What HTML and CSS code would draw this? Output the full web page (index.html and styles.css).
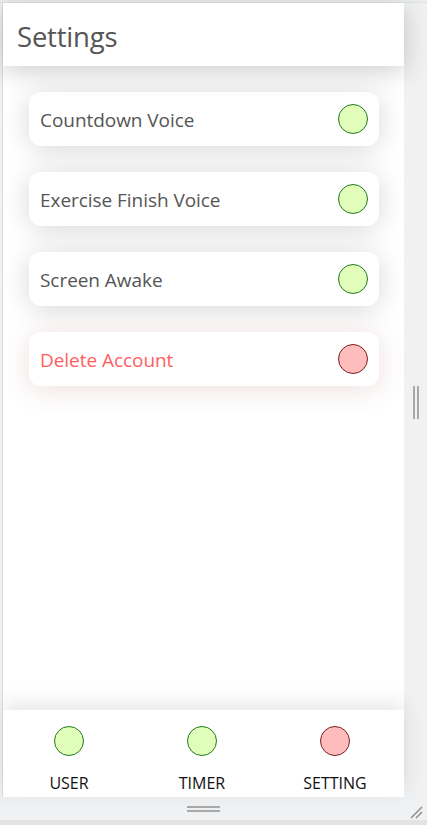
FILE: index.html
```html
<!DOCTYPE html>
<html>
<head>
<meta charset="utf-8">
<link rel="stylesheet" href="styles.css">
</head>
<body>
<div class="frame">
  <div class="top-strip"></div>
  <div class="middle">
    <div class="left-strip"></div>
    <div class="panel">
      <header class="header"><h1 class="title">Settings</h1></header>
      <main class="content">
        <div class="card"><span class="label">Countdown Voice</span><span class="dot green"></span></div>
        <div class="card"><span class="label">Exercise Finish Voice</span><span class="dot green"></span></div>
        <div class="card"><span class="label">Screen Awake</span><span class="dot green"></span></div>
        <div class="card danger"><span class="label">Delete Account</span><span class="dot red"></span></div>
      </main>
      <nav class="nav">
        <div class="tab"><span class="dot green"></span><span class="tab-label">USER</span></div>
        <div class="tab"><span class="dot green"></span><span class="tab-label">TIMER</span></div>
        <div class="tab"><span class="dot red"></span><span class="tab-label">SETTING</span></div>
      </nav>
    </div>
    <div class="side">
      <div class="vgrip"><i></i><i></i></div>
    </div>
  </div>
  <div class="bottom-bar">
    <div class="hgrip"><i></i><i></i></div>
    <svg class="resize" width="14" height="14" viewBox="0 0 14 14">
      <line x1="2" y1="13" x2="13" y2="2" stroke="#8a8a8a" stroke-width="1.5"/>
      <line x1="7" y1="13" x2="13" y2="7" stroke="#8a8a8a" stroke-width="1.5"/>
    </svg>
  </div>
  <div class="bottom-line"></div>
</div>
</body>
</html>
```
FILE: styles.css
```css
html, body {
  margin: 0;
  padding: 0;
}
body {
  width: 427px;
  height: 825px;
  background: #f0f1f3;
  font-family: "Open Sans", "Noto Sans", sans-serif;
  overflow: hidden;
}
.frame {
  display: flex;
  flex-direction: column;
  height: 825px;
}
.top-strip {
  height: 3px;
  background: #eceded;
  border-bottom: 1px solid #e2e3e4;
  box-sizing: border-box;
}
.middle {
  display: flex;
  height: 794px;
}
.left-strip {
  width: 3px;
  background: #f0f1f3;
  border-right: 1px solid #dcdcdc;
  box-sizing: border-box;
}
.panel {
  width: 401px;
  background: #fff;
  display: flex;
  flex-direction: column;
  position: relative;
}
.header {
  height: 63px;
  background: #fff;
  display: flex;
  align-items: center;
  padding-left: 14px;
  box-shadow: 0 5px 26px rgba(0, 0, 0, 0.2);
  position: relative;
  z-index: 2;
}
.title {
  margin: 0;
  padding-top: 3px;
  font-weight: 400;
  font-size: 27.5px;
  color: #555;
  letter-spacing: -0.2px;
}
.content {
  flex: 1;
  padding: 26px 25px 0 26px;
  display: flex;
  flex-direction: column;
  gap: 26px;
}
.card {
  height: 54px;
  border-radius: 12px;
  background: #fff;
  box-shadow: 0 3px 28px rgba(0, 0, 0, 0.16);
  display: flex;
  align-items: center;
  justify-content: space-between;
  padding: 0 11px 0 11px;
}
.card.danger {
  box-shadow: 0 3px 28px rgba(150, 60, 60, 0.17);
}
.label {
  font-size: 19px;
  color: #555;
  letter-spacing: -0.05px;
  padding-top: 2px;
}
.danger .label {
  color: #ff5e5e;
}
.dot {
  width: 28px;
  height: 28px;
  border-radius: 50%;
  box-sizing: content-box;
}
.dot.green {
  background: #e1fdba;
  border: 1px solid #1f7a1f;
}
.dot.red {
  background: #ffbcbc;
  border: 1px solid #7a1f1f;
}
.nav {
  height: 87px;
  background: #fff;
  display: flex;
  justify-content: space-between;
  padding: 0 33px 0 30px;
  box-shadow: 0 -6px 20px rgba(0, 0, 0, 0.10);
  position: relative;
  z-index: 2;
}
.tab {
  display: flex;
  flex-direction: column;
  align-items: center;
  padding-top: 16px;
  gap: 18px;
  width: 72px;
}
.tab-label {
  font-size: 16px;
  color: #111;
  line-height: 18px;
}
.side {
  flex: 1;
  background: #f0f1f3;
  display: flex;
  align-items: center;
  justify-content: center;
}
.vgrip {
  display: flex;
  gap: 2px;
  margin-top: 4px;
}
.vgrip i {
  display: block;
  width: 2px;
  height: 33px;
  background: #a9a9a9;
}
.bottom-bar {
  height: 23px;
  background: #f0f1f3;
  display: flex;
  align-items: center;
  justify-content: center;
  position: relative;
}
.hgrip {
  display: flex;
  flex-direction: column;
  gap: 2px;
  margin-left: -20px;
}
.hgrip i {
  display: block;
  width: 33px;
  height: 2px;
  background: #a9a9a9;
}
.resize {
  position: absolute;
  right: 4px;
  bottom: 1px;
}
.bottom-line {
  height: 5px;
  background: #e3e3e3;
}
```
